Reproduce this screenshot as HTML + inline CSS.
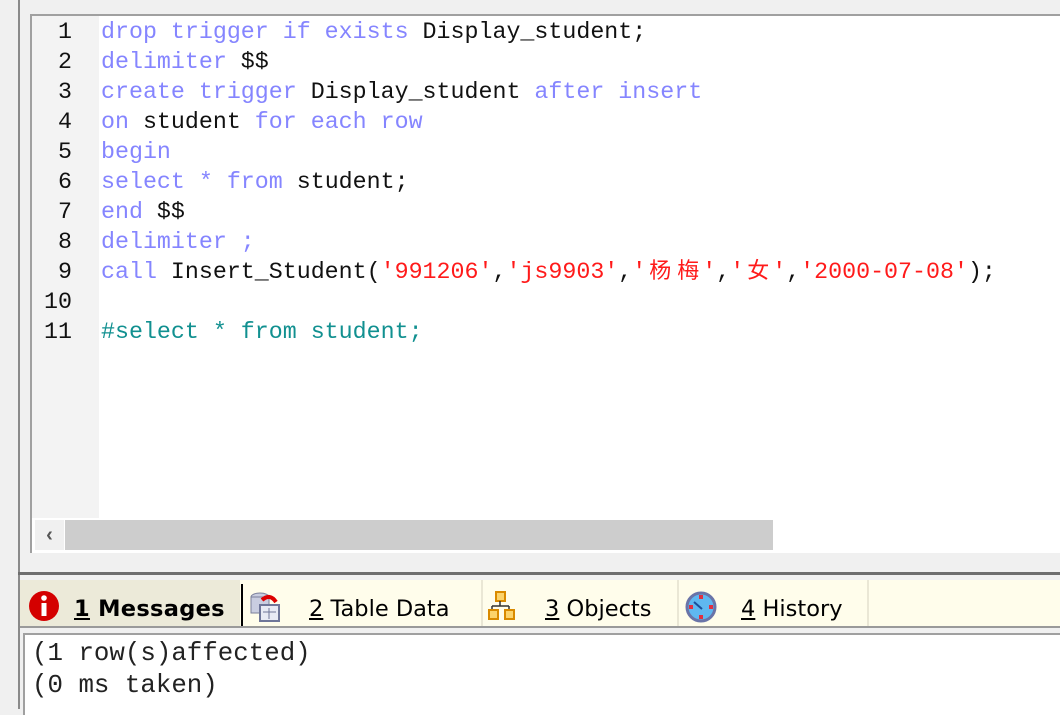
<!DOCTYPE html>
<html><head><meta charset="utf-8"><style>
body{margin:0;width:1060px;height:709px;overflow:hidden;background:#f0f0f0;position:relative;font-family:"Liberation Sans",sans-serif}
.vl{position:absolute;left:18px;top:0;width:2px;height:709px;background:#8a8a8a}
.ed{position:absolute;left:30px;top:14px;width:1040px;height:537px;border-top:2px solid #a0a0a0;border-left:2px solid #a0a0a0;background:#fff}
.gut{position:absolute;left:0;top:0;width:67px;height:502px;background:#f3f3f3}
.code{position:absolute;left:0;top:1px;font-family:"Liberation Mono","Noto Sans CJK SC",monospace;font-size:23.3px;line-height:30px;white-space:pre;color:#111}
.ln{position:absolute;left:0;width:40px;text-align:right;color:#111}
.tx{position:absolute;left:69px}
.k{color:#8585ff}.s{color:#ff1a1a}.c{color:#119090}
.cj{display:inline-block;width:28px;text-align:center;font-size:22px}
.sb{position:absolute;left:0;top:502px;width:1040px;height:32px;background:#fff}
.arr{position:absolute;left:3px;top:2px;width:29px;height:30px;background:#f0f0f0;color:#555;font-size:20px;text-align:center;line-height:30px;font-weight:bold}
.trk{position:absolute;left:33px;top:2px;width:708px;height:30px;background:#cdcdcd}
.hl{position:absolute;left:18px;top:572px;width:1042px;height:3px;background:#6e6e6e}
.tabs{position:absolute;left:20px;top:580px;width:1040px;height:46px;background:#fffdeb;border-bottom:2px solid #9a9a9a}
.tab{position:absolute;top:6px;height:46px;font-family:"DejaVu Sans",sans-serif;font-size:22.5px;line-height:46px;color:#000}
.sep{position:absolute;top:0;width:2px;height:46px;background:#eae7d5}
.out{position:absolute;left:23px;top:633px;width:1040px;height:80px;background:#fff;border-left:2px solid #a0a0a0;border-top:2px solid #a0a0a0;font-family:"Liberation Mono",monospace;font-size:25.8px;line-height:32px;white-space:pre;color:#222}
</style></head><body>
<div class="vl"></div>
<div class="ed">
<div class="gut"></div>
<div class="code">
<div class="ln" style="top:0">1</div><div class="ln" style="top:30px">2</div><div class="ln" style="top:60px">3</div><div class="ln" style="top:90px">4</div><div class="ln" style="top:120px">5</div><div class="ln" style="top:150px">6</div><div class="ln" style="top:180px">7</div><div class="ln" style="top:210px">8</div><div class="ln" style="top:240px">9</div><div class="ln" style="top:270px">10</div><div class="ln" style="top:300px">11</div>
<div class="tx" style="top:0"><span class="k">drop trigger if exists</span> Display_student;</div>
<div class="tx" style="top:30px"><span class="k">delimiter</span> $$</div>
<div class="tx" style="top:60px"><span class="k">create trigger</span> Display_student <span class="k">after insert</span></div>
<div class="tx" style="top:90px"><span class="k">on</span> student <span class="k">for each row</span></div>
<div class="tx" style="top:120px"><span class="k">begin</span></div>
<div class="tx" style="top:150px"><span class="k">select * from</span> student;</div>
<div class="tx" style="top:180px"><span class="k">end</span> $$</div>
<div class="tx" style="top:210px"><span class="k">delimiter ;</span></div>
<div class="tx" style="top:240px"><span class="k">call</span> Insert_Student(<span class="s">'991206'</span>,<span class="s">'js9903'</span>,<span class="s">'<span class="cj">杨</span><span class="cj">梅</span>'</span>,<span class="s">'<span class="cj">女</span>'</span>,<span class="s">'2000-07-08'</span>);</div>
<div class="tx" style="top:300px"><span class="c">#select * from student;</span></div>
</div>
<div class="sb"><div class="arr">&lsaquo;</div><div class="trk"></div></div>
</div>
<div class="hl"></div>
<div class="tabs">
<div style="position:absolute;left:0;top:0;width:220px;height:46px;background:#ecead9"></div>
<div style="position:absolute;left:221px;top:4px;width:2px;height:42px;background:#000"></div>
<svg style="position:absolute;left:7px;top:9px" width="34" height="34"><circle cx="17" cy="17" r="15" fill="#d40000"/><rect x="14.5" y="14" width="5" height="13" fill="#fff"/><circle cx="17" cy="9" r="2.8" fill="#fff"/></svg>
<div class="tab" style="left:54px;font-weight:bold;font-size:22.5px;letter-spacing:0.3px"><u>1</u> Messages</div>
<svg style="position:absolute;left:228px;top:10px" width="34" height="34"><ellipse cx="12" cy="7" rx="9" ry="4" fill="#c9cde0" stroke="#7a7f9a"/><rect x="3" y="7" width="18" height="16" fill="#c9cde0" stroke="#7a7f9a"/><rect x="12" y="15" width="19" height="16" fill="#e8eaf4" stroke="#6f7699" stroke-width="2"/><path d="M15 22h13M21 18v11" stroke="#6f7699"/><path d="M14 10q8-7 14 2" stroke="#d00" stroke-width="4" fill="none"/></svg>
<div class="tab" style="left:289px"><u>2</u> Table Data</div>
<div class="sep" style="left:461px"></div>
<svg style="position:absolute;left:468px;top:11px" width="34" height="32"><rect x="8" y="1" width="9" height="9" fill="#fcd36b" stroke="#d98a00" stroke-width="2"/><path d="M12 10v5M4 15h17M4 15v4M21 15v4" stroke="#333" stroke-width="1.5" fill="none"/><rect x="1" y="19" width="9" height="9" fill="#fcd36b" stroke="#d98a00" stroke-width="2"/><rect x="17" y="19" width="9" height="9" fill="#fcd36b" stroke="#d98a00" stroke-width="2"/></svg>
<div class="tab" style="left:525px"><u>3</u> Objects</div>
<div class="sep" style="left:657px"></div>
<svg style="position:absolute;left:664px;top:10px" width="34" height="34"><circle cx="17" cy="17" r="14" fill="#5fb8f0" stroke="#6a74a8" stroke-width="3"/><path d="M10 12l8 7" stroke="#1a4f9a" stroke-width="2"/><rect x="15" y="5" width="4" height="4" fill="#e03040"/><rect x="15" y="25" width="4" height="4" fill="#e03040"/><rect x="5" y="15" width="4" height="4" fill="#e03040"/><rect x="25" y="15" width="4" height="4" fill="#e03040"/></svg>
<div class="tab" style="left:721px"><u>4</u> History</div>
<div class="sep" style="left:847px"></div>
</div>
<div class="out"><div style="position:absolute;left:7px;top:3px">(1 row(s)affected)</div><div style="position:absolute;left:7px;top:35px">(0 ms taken)</div></div>
</body></html>
